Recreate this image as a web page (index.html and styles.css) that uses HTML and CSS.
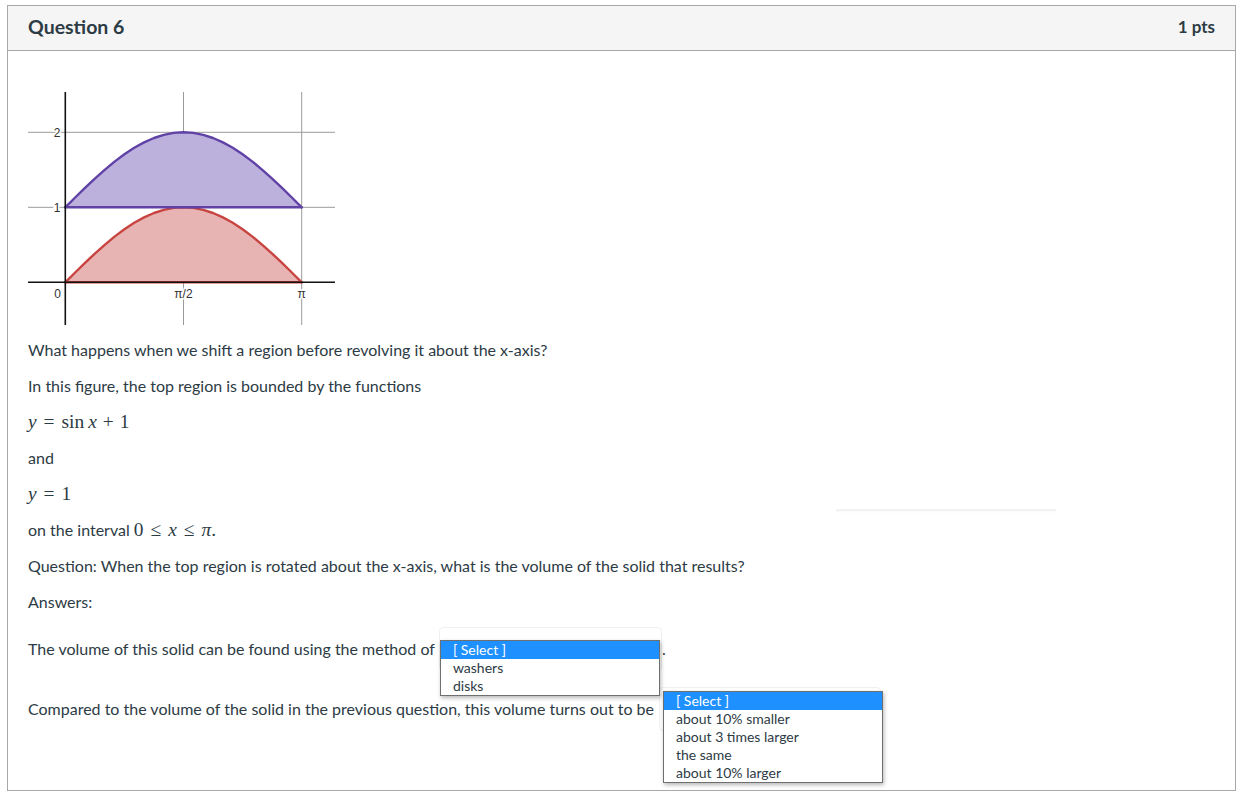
FILE: index.html
```html
<!DOCTYPE html>
<html>
<head>
<meta charset="utf-8">
<link rel="stylesheet" href="styles.css">
</head>
<body>
<div class="question">
  <div class="q-header">
    <span class="q-title">Question 6</span>
    <span class="q-pts">1 pts</span>
  </div>
  <div class="q-body">
    <svg class="graph" width="310" height="255" viewBox="0 0 310 255">
      <g stroke="#9a9a9a" stroke-width="1">
        <line x1="155.5" y1="21" x2="155.5" y2="254"/>
        <line x1="273.7" y1="21" x2="273.7" y2="254"/>
        <line x1="0" y1="61.3" x2="307" y2="61.3"/>
        <line x1="0" y1="136.3" x2="307" y2="136.3"/>
      </g>
      <polygon fill="#bcb0dc" points="37.3,136.3 47.15,126.5 57,116.9 66.85,107.6 76.7,98.8 86.55,90.6 96.4,83.3 106.25,76.8 116.1,71.35 125.95,67 135.8,63.9 145.65,61.9 155.5,61.3 165.35,61.9 175.2,63.9 185.05,67 194.9,71.35 204.75,76.8 214.6,83.3 224.45,90.6 234.3,98.8 244.15,107.6 254,116.9 263.85,126.5 273.7,136.3"/>
      <polygon fill="#e8b4b3" points="37.3,211.3 47.15,201.5 57,191.9 66.85,182.6 76.7,173.8 86.55,165.6 96.4,158.3 106.25,151.8 116.1,146.35 125.95,142 135.8,138.9 145.65,136.9 155.5,136.3 165.35,136.9 175.2,138.9 185.05,142 194.9,146.35 204.75,151.8 214.6,158.3 224.45,165.6 234.3,173.8 244.15,182.6 254,191.9 263.85,201.5 273.7,211.3"/>
      <g fill="none" stroke-width="2.4" stroke-linejoin="round" stroke-linecap="round">
        <polyline stroke="#c74440" points="37.3,211.3 47.15,201.5 57,191.9 66.85,182.6 76.7,173.8 86.55,165.6 96.4,158.3 106.25,151.8 116.1,146.35 125.95,142 135.8,138.9 145.65,136.9 155.5,136.3 165.35,136.9 175.2,138.9 185.05,142 194.9,146.35 204.75,151.8 214.6,158.3 224.45,165.6 234.3,173.8 244.15,182.6 254,191.9 263.85,201.5 273.7,211.3"/>
        <polyline stroke="#6042a6" points="37.3,136.3 47.15,126.5 57,116.9 66.85,107.6 76.7,98.8 86.55,90.6 96.4,83.3 106.25,76.8 116.1,71.35 125.95,67 135.8,63.9 145.65,61.9 155.5,61.3 165.35,61.9 175.2,63.9 185.05,67 194.9,71.35 204.75,76.8 214.6,83.3 224.45,90.6 234.3,98.8 244.15,107.6 254,116.9 263.85,126.5 273.7,136.3"/>
        <line stroke="#6042a6" x1="37.3" y1="136.3" x2="273.7" y2="136.3"/>
        <line stroke="#c74440" x1="37.3" y1="211.3" x2="273.7" y2="211.3"/>
      </g>
      <g stroke="#111" stroke-width="1.6">
        <line x1="37.3" y1="21" x2="37.3" y2="254"/>
        <line x1="0" y1="211.3" x2="307" y2="211.3"/>
      </g>
      <g class="lbl" font-family="Liberation Sans, Arial, sans-serif" font-size="12" fill="#333" text-anchor="middle">
        <text x="29" y="65.5">2</text>
        <text x="29" y="140.5">1</text>
        <text x="29.7" y="227">0</text>
        <text x="155.5" y="227">π/2</text>
        <text x="273.7" y="227">π</text>
      </g>
    </svg>
    <p>What happens when we shift a region before revolving it about the x-axis?</p>
    <p>In this figure, the top region is bounded by the functions</p>
    <p class="math"><i>y</i><span class="rel">=</span>sin<span class="sp"></span><i>x</i><span class="bin">+</span>1</p>
    <p>and</p>
    <p class="math"><i>y</i><span class="rel">=</span>1</p>
    <p>on the interval <span class="math">0<span class="rel">≤</span><i>x</i><span class="rel">≤</span><i>π</i>.</span></p>
    <p>Question: When the top region is rotated about the x-axis, what is the volume of the solid that results?</p>
    <p>Answers:</p>
    <p class="ans ans1">The volume of this solid can be found using the method of
      <span class="select sel1">
        <span class="popup pop1">
          <span class="opt on">[ Select ]</span>
          <span class="opt">washers</span>
          <span class="opt">disks</span>
        </span>
      </span>.
    </p>
    <p class="ans ans2">Compared to the volume of the solid in the previous question, this volume turns out to be
      <span class="select sel2">
        <span class="popup pop2">
          <span class="opt on">[ Select ]</span>
          <span class="opt">about 10% smaller</span>
          <span class="opt">about 3 times larger</span>
          <span class="opt">the same</span>
          <span class="opt">about 10% larger</span>
        </span>
      </span>
    </p>
    <div class="ghost"></div>
  </div>
</div>
</body>
</html>
```

FILE: styles.css
```css
html, body {
  margin: 0;
  padding: 0;
  background: #fff;
}
body {
  font-family: Lato, "Open Sans", sans-serif;
  color: #2d3b45;
}
.question {
  margin: 5px 0 0 7px;
  width: 1227px;
  border: 1px solid #a8a8a8;
}
.q-header {
  height: 45px;
  box-sizing: border-box;
  padding: 0 20px 3px 20px;
  background: #f5f5f5;
  border-bottom: 1px solid #a8a8a8;
  display: flex;
  align-items: center;
  justify-content: space-between;
}
.q-title {
  font-size: 19.5px;
  font-weight: 700;
  color: #2d3b45;
}
.q-pts {
  font-size: 17px;
  font-weight: 700;
  color: #2d3b45;
}
.q-body {
  position: relative;
  padding: 20px 20px 58px 20px;
}
.graph {
  display: block;
  margin-bottom: 12px;
}
.lbl text {
  paint-order: stroke;
  stroke: #fff;
  stroke-width: 3px;
}
.q-body p {
  margin: 0 0 12px 0;
  font-size: 16px;
  line-height: 24px;
}
.math {
  font-family: "Liberation Serif", "DejaVu Serif", serif;
  font-size: 19.4px;
  color: #2d3b45;
}
.q-body p.math {
  font-size: 19.4px;
}
.math i {
  font-style: italic;
}
.rel {
  margin: 0 7px;
}
.bin {
  margin: 0 6px;
}
.sp {
  display: inline-block;
  width: 4px;
}
.q-body p.ans {
  display: flex;
  align-items: center;
  height: 46px;
  margin: 0;
}
.q-body p.ans1 {
  margin-bottom: 14px;
}
.select {
  position: relative;
  display: inline-block;
  width: 223px;
  height: 44px;
  margin: 0 0 0 4px;
  border: 1px solid #f0f0f0;
  border-radius: 4px;
  box-sizing: border-box;
}
.sel2 {
  margin-left: 5px;
  width: 222px;
}
.popup {
  position: absolute;
  display: flex;
  flex-direction: column;
  width: 220px;
  background: #fff;
  border: 1px solid #6f6f6f;
  box-sizing: border-box;
  box-shadow: 1px 2px 4px rgba(0,0,0,0.28);
  z-index: 2;
}
.pop1 {
  left: 0px;
  top: 12px;
}
.pop2 {
  left: 3px;
  top: 3px;
}
.opt {
  height: 18px;
  line-height: 18px;
  padding-left: 12px;
  font-size: 14px;
  color: #2d3b45;
  white-space: nowrap;
}
.opt.on {
  background: #1e90ff;
  color: #fff;
}
.ghost {
  position: absolute;
  left: 828px;
  top: 458px;
  width: 220px;
  height: 2px;
  background: #f2f2f2;
  box-shadow: 0 1px 2px rgba(0,0,0,0.03);
}
```
